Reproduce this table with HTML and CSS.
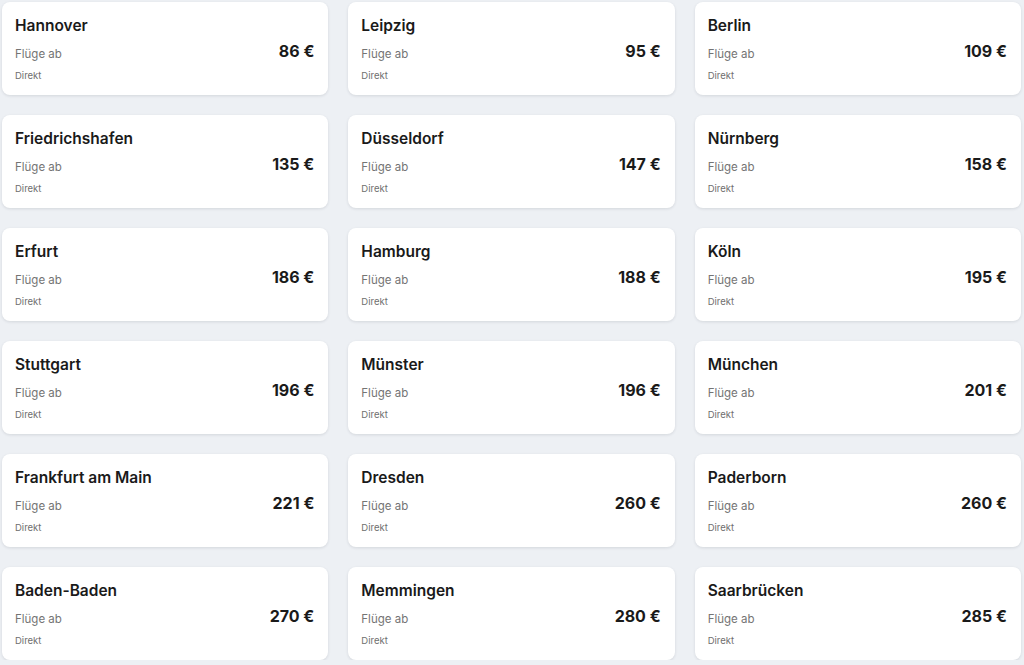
FILE: index.html
```html
<!DOCTYPE html>
<html lang="de">
<head>
<meta charset="utf-8">
<title>Flüge</title>
<link rel="stylesheet" href="styles.css">
</head>
<body>
<main class="grid">
  <div class="card"><div class="city">Hannover</div><div class="row"><span class="label">Flüge ab</span><span class="price">86 €</span></div><div class="direct">Direkt</div></div>
  <div class="card"><div class="city">Leipzig</div><div class="row"><span class="label">Flüge ab</span><span class="price">95 €</span></div><div class="direct">Direkt</div></div>
  <div class="card"><div class="city">Berlin</div><div class="row"><span class="label">Flüge ab</span><span class="price">109 €</span></div><div class="direct">Direkt</div></div>
  <div class="card"><div class="city">Friedrichshafen</div><div class="row"><span class="label">Flüge ab</span><span class="price">135 €</span></div><div class="direct">Direkt</div></div>
  <div class="card"><div class="city">Düsseldorf</div><div class="row"><span class="label">Flüge ab</span><span class="price">147 €</span></div><div class="direct">Direkt</div></div>
  <div class="card"><div class="city">Nürnberg</div><div class="row"><span class="label">Flüge ab</span><span class="price">158 €</span></div><div class="direct">Direkt</div></div>
  <div class="card"><div class="city">Erfurt</div><div class="row"><span class="label">Flüge ab</span><span class="price">186 €</span></div><div class="direct">Direkt</div></div>
  <div class="card"><div class="city">Hamburg</div><div class="row"><span class="label">Flüge ab</span><span class="price">188 €</span></div><div class="direct">Direkt</div></div>
  <div class="card"><div class="city">Köln</div><div class="row"><span class="label">Flüge ab</span><span class="price">195 €</span></div><div class="direct">Direkt</div></div>
  <div class="card"><div class="city">Stuttgart</div><div class="row"><span class="label">Flüge ab</span><span class="price">196 €</span></div><div class="direct">Direkt</div></div>
  <div class="card"><div class="city">Münster</div><div class="row"><span class="label">Flüge ab</span><span class="price">196 €</span></div><div class="direct">Direkt</div></div>
  <div class="card"><div class="city">München</div><div class="row"><span class="label">Flüge ab</span><span class="price">201 €</span></div><div class="direct">Direkt</div></div>
  <div class="card"><div class="city">Frankfurt am Main</div><div class="row"><span class="label">Flüge ab</span><span class="price">221 €</span></div><div class="direct">Direkt</div></div>
  <div class="card"><div class="city">Dresden</div><div class="row"><span class="label">Flüge ab</span><span class="price">260 €</span></div><div class="direct">Direkt</div></div>
  <div class="card"><div class="city">Paderborn</div><div class="row"><span class="label">Flüge ab</span><span class="price">260 €</span></div><div class="direct">Direkt</div></div>
  <div class="card"><div class="city">Baden-Baden</div><div class="row"><span class="label">Flüge ab</span><span class="price">270 €</span></div><div class="direct">Direkt</div></div>
  <div class="card"><div class="city">Memmingen</div><div class="row"><span class="label">Flüge ab</span><span class="price">280 €</span></div><div class="direct">Direkt</div></div>
  <div class="card"><div class="city">Saarbrücken</div><div class="row"><span class="label">Flüge ab</span><span class="price">285 €</span></div><div class="direct">Direkt</div></div>
</main>
</body>
</html>
```
FILE: styles.css
```css
html, body {
  margin: 0;
  padding: 0;
  background: #edf0f4;
  font-family: Inter, "Noto Sans", "Liberation Sans", sans-serif;
  color: #1a1a1a;
}
.grid {
  display: grid;
  grid-template-columns: repeat(3, 1fr);
  column-gap: 20px;
  row-gap: 20px;
  padding: 2px 3px 0 2px;
}
.card {
  background: #ffffff;
  border-radius: 8px;
  box-shadow: 0 1px 3px rgba(30, 40, 60, 0.12);
  padding: 14px 14px 0 13px;
  height: 93px;
  box-sizing: border-box;
}
.city {
  font-size: 15.5px;
  line-height: 20px;
  font-weight: 600;
  color: #1a1a1a;
}
.row {
  display: flex;
  justify-content: space-between;
  align-items: flex-start;
  margin-top: 5px;
  line-height: 20px;
}
.label {
  font-size: 11.5px;
  color: #747474;
  padding-top: 3px;
}
.price {
  font-size: 16px;
  font-weight: 700;
  color: #1a1a1a;
}
.direct {
  margin-top: 5px;
  font-size: 9.5px;
  line-height: 14px;
  color: #6f6f6f;
}
```
